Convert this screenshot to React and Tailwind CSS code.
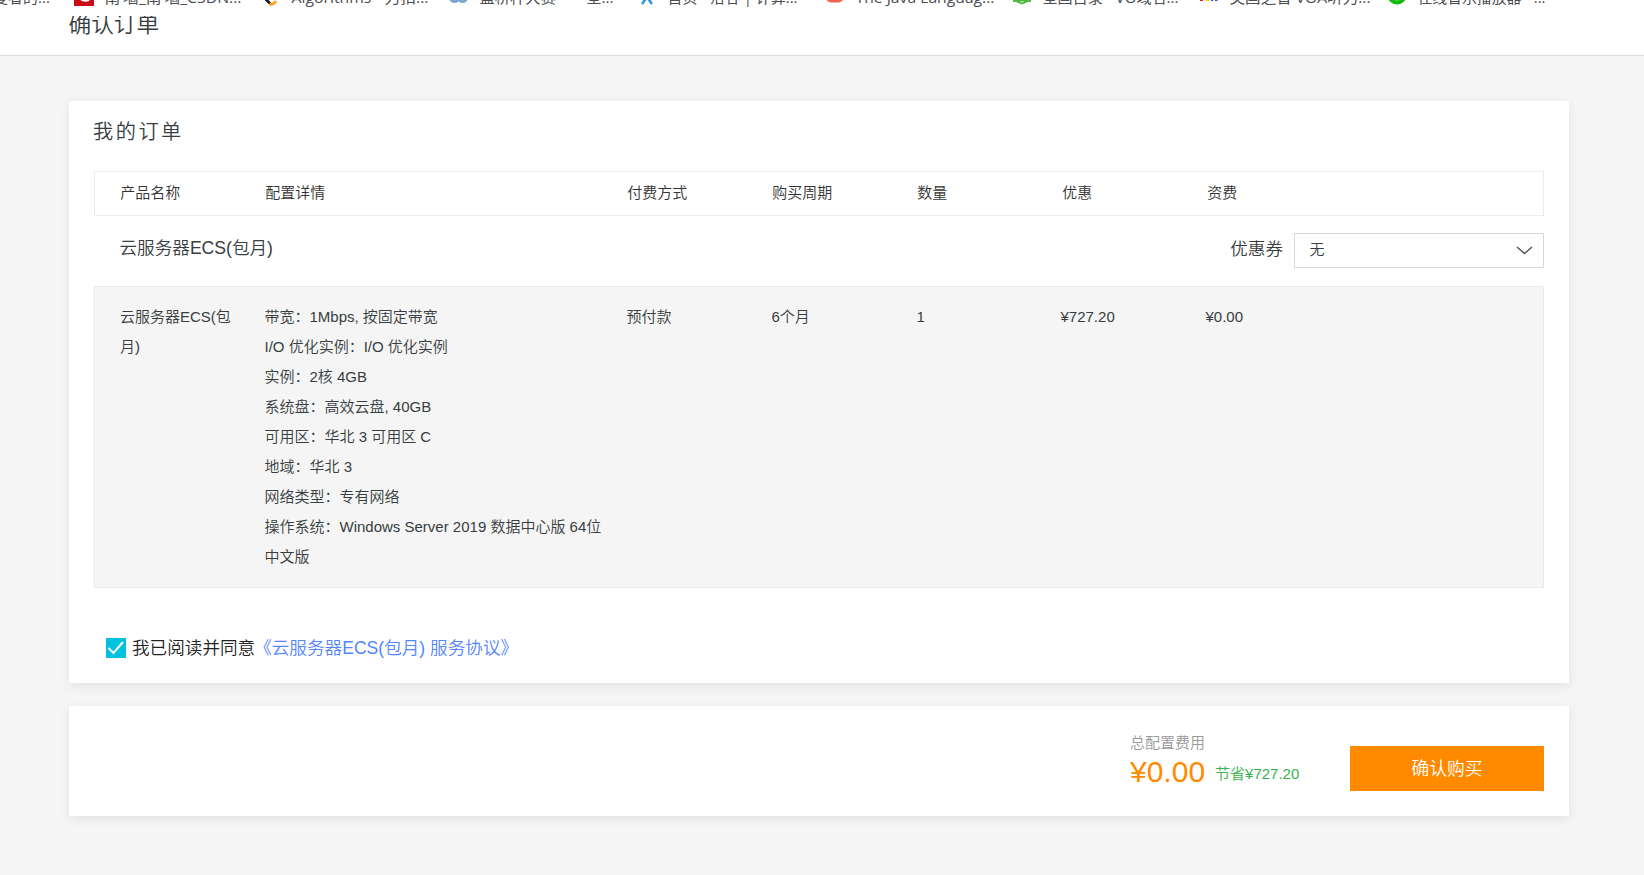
import { useState } from "react";

const bookmarks = [
  { label: "夏者的...", icon: null, className: "w-[68px] pl-0", textClass: "-ml-[13px]" },
  { label: "南˙墙_南˙墙_CSDN...", icon: "csdn", className: "w-[187px]", width: 137 },
  { label: "Algorithms - 力扣...", icon: "leetcode", className: "w-[188px]", width: 137 },
  { label: "蓝桥杯大赛——全...", icon: "lanqiao", className: "w-[188px]", width: 134 },
  { label: "首页 - 洛谷 | 计算...", icon: "luogu", className: "w-[188px]", width: 130 },
  { label: "The Java Languag...", icon: "java", className: "w-[187px]", width: 139 },
  { label: "全国目录 - VO域名...", icon: "vo", className: "w-[187px]", width: 136 },
  { label: "英国之音 VOA听力...", icon: "voa", className: "w-[188px]", width: 141 },
  { label: "在线音乐播放器 - ...", icon: "music", className: "w-[188px]", width: 128 },
];

const columns = ["产品名称", "配置详情", "付费方式", "购买周期", "数量", "优惠", "资费"];

const details = [
  "带宽：1Mbps, 按固定带宽",
  "I/O 优化实例：I/O 优化实例",
  "实例：2核 4GB",
  "系统盘：高效云盘, 40GB",
  "可用区：华北 3 可用区 C",
  "地域：华北 3",
  "网络类型：专有网络",
  "操作系统：Windows Server 2019 数据中心版 64位中文版",
];

const gridClass = "grid border border-[#ebebeb]";

const BookmarkIcon = ({ name }) => (
  <svg width="20" height="20" viewBox="0 0 20 20" className="shrink-0">
    {name === "csdn" && (
      <>
        <rect width="20" height="20" fill="#ca0c16" />
        <path d="M15 13.500c-5 1.500-9 .2-8.500-3.500S11 4 15 5.500" fill="none" stroke="#fff" strokeWidth="3" />
      </>
    )}
    {name === "leetcode" && (
      <>
        <path d="M11 2 4.500 9a3 3 0 0 0 0 4l4.500 4.500" fill="none" stroke="#111" strokeWidth="2.600" />
        <path d="M8.500 17.800c2 1.300 4 .8 6.500-2.800" fill="none" stroke="#ffa116" strokeWidth="2.600" />
      </>
    )}
    {name === "lanqiao" && (
      <g fill="none" stroke="#7ba7d0" strokeWidth="3">
        <circle cx="5.500" cy="11.500" r="4" />
        <circle cx="13.500" cy="11.500" r="4" />
      </g>
    )}
    {name === "luogu" && (
      <path d="M5 18 10 11l5 7M10 11V2" fill="none" stroke="#3498db" strokeWidth="2.600" />
    )}
    {name === "java" && <rect x="1" y="1" width="17.500" height="15.500" rx="5" fill="#f26350" />}
    {name === "vo" && (
      <path d="M1 15l5-.5h8l5 .5M4 15l6 2.500 6-2.500" fill="none" stroke="#4cb83c" strokeWidth="1.800" />
    )}
    {name === "voa" && (
      <>
        <path d="M1 12h3v3H1z" fill="#f01414" />
        <path d="M7 12h4v3H7z" fill="#f5d800" />
        <path d="M12 12h2v3h-2zM16 12h2.500v3H16z" fill="#2050f0" />
      </>
    )}
    {name === "music" && (
      <>
        <circle cx="10" cy="9" r="9.500" fill="#12b80d" />
        <circle cx="10" cy="9" r="6" fill="#3fe03a" />
      </>
    )}
  </svg>
);

const App = () => {
  const [checked, setChecked] = useState(true);

  return (
    <div className="h-[875px] w-[1644px] overflow-hidden bg-[#f5f5f5] font-['Liberation_Sans','Noto_Sans_CJK_SC',sans-serif] font-[350] text-[#373d41]">
      <header className="h-14 overflow-hidden border-b border-[#dcdcdc] bg-white">
        <div className="flex h-4 items-end overflow-hidden font-['Open_Sans','Noto_Sans_CJK_SC',sans-serif] text-[15px] font-normal text-[#4a4d51]">
          {bookmarks.map((item) => (
            <div key={item.label} className={`flex h-[34px] shrink-0 gap-2.5 pl-1.5 ${item.className}`}>
              {item.icon && (
                <div className="pt-1">
                  <BookmarkIcon name={item.icon} />
                </div>
              )}
              {item.icon ? (
                <svg width={item.width} height="34" className="shrink-0 overflow-visible">
                  <text x="0.5" y="21" fill="currentColor" textLength={item.width} lengthAdjust="spacingAndGlyphs">
                    {item.label}
                  </text>
                </svg>
              ) : (
                <span className={`whitespace-nowrap leading-[31px] ${item.textClass}`}>{item.label}</span>
              )}
            </div>
          ))}
        </div>
        <div className="h-10 overflow-hidden pl-[68.5px]">
          <h1 className="-mt-[9px] text-[22.7px] leading-[34px]">确认订单</h1>
        </div>
      </header>

      <main className="mr-[75px] ml-[69px] pt-[45px]">
        <section className="h-[582px] bg-white px-[25px] shadow-[0_3px_10px_rgba(0,0,0,0.08)]">
          <h2 className="-ml-px h-[70px] pt-4 text-[20.2px] leading-[30px] tracking-[2.5px]">我的订单</h2>
          <div
            className={`${gridClass} h-[45px] grid-cols-[145px_362px_145px_145px_145px_145px_1fr] pl-[25.3px] text-[15px] leading-[42px] text-[#333]`}
          >
            {columns.map((name) => (
              <span key={name}>{name}</span>
            ))}
          </div>
          <div className="flex h-[70px] items-start pl-[25.5px] text-[17.6px]">
            <span className="pt-[19px] leading-[26px]">云服务器ECS(包月)</span>
            <span className="mr-[11px] ml-auto pt-5 leading-[26px]">优惠券</span>
            <button className="mt-[17px] flex h-[35px] w-[250px] items-center justify-between border border-[#d7d8d9] pr-2.5 pl-[14.5px] text-[15px]">
              无
              <svg width="17" height="9" viewBox="0 0 17 9" fill="none" stroke="#555" strokeWidth="1.5">
                <path d="M1 1 8.500 7.500 16 1" />
              </svg>
            </button>
          </div>
          <div
            className={`${gridClass} h-[302px] grid-cols-[144.5px_362px_145px_145px_144px_145px_1fr] bg-[#f5f5f5] pt-[15px] pl-[25px] text-[15px] leading-[30px]`}
          >
            <p className="w-[116px]">云服务器ECS(包月)</p>
            <div className="w-[342px]">
              {details.map((line) => (
                <p key={line}>{line}</p>
              ))}
            </div>
            <p>预付款</p>
            <p>6个月</p>
            <p>1</p>
            <p>¥727.20</p>
            <p>¥0.00</p>
          </div>
          <div className="flex items-center pt-[46px] pl-3 text-[17.6px] leading-[28px] text-[#222]">
            <button
              onClick={() => setChecked(!checked)}
              className="mr-1.5 flex h-5 w-5 items-center justify-center bg-[#00c1de]"
            >
              {checked && (
                <svg width="18" height="14" viewBox="0 0 18 14" fill="none" stroke="#fff" strokeWidth="2">
                  <path d="M1.500 7l5 5 9.500-11" />
                </svg>
              )}
            </button>
            我已阅读并同意
            <a href="#" className="-ml-px text-[#5584ff]">
              《云服务器ECS(包月) 服务协议》
            </a>
          </div>
        </section>

        <section className="mt-[23px] flex h-[110px] bg-white pr-[25px] shadow-[0_3px_10px_rgba(0,0,0,0.08)]">
          <div className="ml-auto w-[220px] pt-[26px]">
            <p className="text-[15px] leading-[22px] text-[#999]">总配置费用</p>
            <div className="flex items-center">
              <span className="text-[30px] leading-[36px] text-[#ff8a00]">¥0.00</span>
              <span className="ml-2.5 pt-1 text-[15px] leading-[22px] text-[#35b34a]">节省¥727.20</span>
            </div>
          </div>
          <button className="mt-10 h-[45px] w-[194px] bg-[#ff8a00] pt-px text-[17.8px] text-white">确认购买</button>
        </section>
      </main>
    </div>
  );
};

export default App;
